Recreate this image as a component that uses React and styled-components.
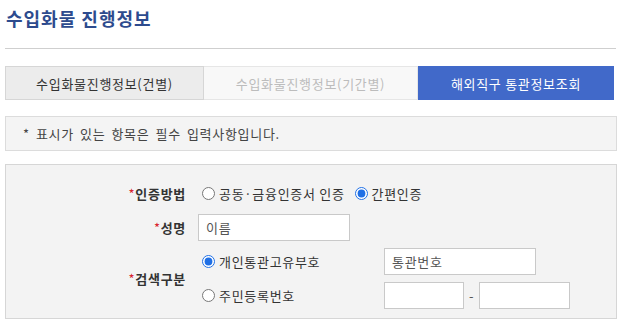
import React from "react";
import styled, { createGlobalStyle } from "styled-components";

const GlobalStyle = createGlobalStyle`
  body {
    margin: 0;
    background: #fff;
    font-family: "Noto Sans CJK KR", "Noto Sans", sans-serif;
    color: #333;
    letter-spacing: 0.7px;
  }
`;

const Page = styled.div`
  width: 612px;
  padding-left: 5px;
`;

const Header = styled.div`
  height: 48px;
  width: 611px;
  border-bottom: 1px solid #cfcfcf;
`;

const Title = styled.h1`
  margin: 0;
  padding: 5px 0 0 1px;
  font-size: 18px;
  line-height: 26px;
  font-weight: 700;
  color: #2d4b8e;
  letter-spacing: 1px;
`;

const Tabs = styled.div`
  display: flex;
  margin-top: 17px;
  height: 34px;
`;

const Tab = styled.div`
  box-sizing: border-box;
  width: ${(p) => p.w}px;
  display: flex;
  align-items: center;
  justify-content: center;
  font-size: 13px;
  background: ${(p) => (p.active ? "#4169c9" : p.dim ? "#f8f8f8" : "#ececec")};
  color: ${(p) => (p.active ? "#fff" : p.dim ? "#bcbcbc" : "#333")};
  border: 1px solid ${(p) => (p.active ? "#4169c9" : p.dim ? "#e6e6e6" : "#d6d6d6")};
  border-left: ${(p) => (p.dim ? "none" : "")};
`;

const Notice = styled.div`
  box-sizing: border-box;
  margin-top: 16px;
  height: 35px;
  background: #f4f4f4;
  border: 1px solid #dcdcdc;
  display: flex;
  align-items: center;
  padding-left: 17px;
  font-size: 13px;
  color: #444;
  word-spacing: 2.5px;
`;

const FormBox = styled.div`
  box-sizing: border-box;
  margin-top: 13px;
  background: #f3f3f3;
  border: 1px solid #d6d6d6;
  padding: 15px 0 9px;
  display: grid;
  grid-template-columns: 180px 1fr;
  column-gap: 12px;
  row-gap: 7px;
  align-items: center;
`;

const Label = styled.div`
  text-align: right;
  font-size: 13px;
  font-weight: 700;
  color: #333;
`;

const Star = styled.span`
  color: #d9232e;
  font-weight: 400;
`;

const Field = styled.div`
  display: flex;
  align-items: center;
  height: 27px;
`;

const RadioLabel = styled.label`
  display: inline-flex;
  align-items: center;
  font-size: 13px;
  color: #333;
  margin-right: 6px;
  width: ${(p) => (p.w ? p.w + "px" : "auto")};

  input {
    margin: 0 4px 0 4px;
    width: 13px;
    height: 13px;
    accent-color: #1f6fe5;
  }
`;

const TextInput = styled.input`
  box-sizing: border-box;
  width: ${(p) => p.w}px;
  height: 27px;
  border: 1px solid #c9c9c9;
  background: #fff;
  padding: 0 7px;
  font-family: inherit;
  letter-spacing: inherit;
  font-size: 13px;
  color: #444;
  outline: none;

  &::placeholder {
    color: #555;
  }
`;

const Dash = styled.span`
  width: 15px;
  text-align: center;
  font-size: 13px;
  color: #555;
`;

const SearchGrid = styled.div`
  display: grid;
  grid-template-columns: 186px 1fr;
  row-gap: 7px;
  align-items: center;
`;

export default function App() {
  return (
    <>
      <GlobalStyle />
      <Page>
        <Header>
          <Title>수입화물 진행정보</Title>
        </Header>
        <Tabs>
          <Tab w={199}>수입화물진행정보(건별)</Tab>
          <Tab w={214} dim>
            수입화물진행정보(기간별)
          </Tab>
          <Tab w={196} active>
            해외직구 통관정보조회
          </Tab>
        </Tabs>
        <Notice>* 표시가 있는 항목은 필수 입력사항입니다.</Notice>
        <FormBox>
          <Label>
            <Star>*</Star>인증방법
          </Label>
          <Field>
            <RadioLabel>
              <input type="radio" name="auth" />
              공동·금융인증서 인증
            </RadioLabel>
            <RadioLabel>
              <input type="radio" name="auth" defaultChecked />
              간편인증
            </RadioLabel>
          </Field>

          <Label>
            <Star>*</Star>성명
          </Label>
          <Field>
            <TextInput w={152} placeholder="이름" />
          </Field>

          <Label>
            <Star>*</Star>검색구분
          </Label>
          <SearchGrid>
            <Field>
              <RadioLabel w={186}>
                <input type="radio" name="kind" defaultChecked />
                개인통관고유부호
              </RadioLabel>
            </Field>
            <Field>
              <TextInput w={152} placeholder="통관번호" />
            </Field>
            <Field>
              <RadioLabel w={186}>
                <input type="radio" name="kind" />
                주민등록번호
              </RadioLabel>
            </Field>
            <Field>
              <TextInput w={80} />
              <Dash>-</Dash>
              <TextInput w={91} />
            </Field>
          </SearchGrid>
        </FormBox>
      </Page>
    </>
  );
}
